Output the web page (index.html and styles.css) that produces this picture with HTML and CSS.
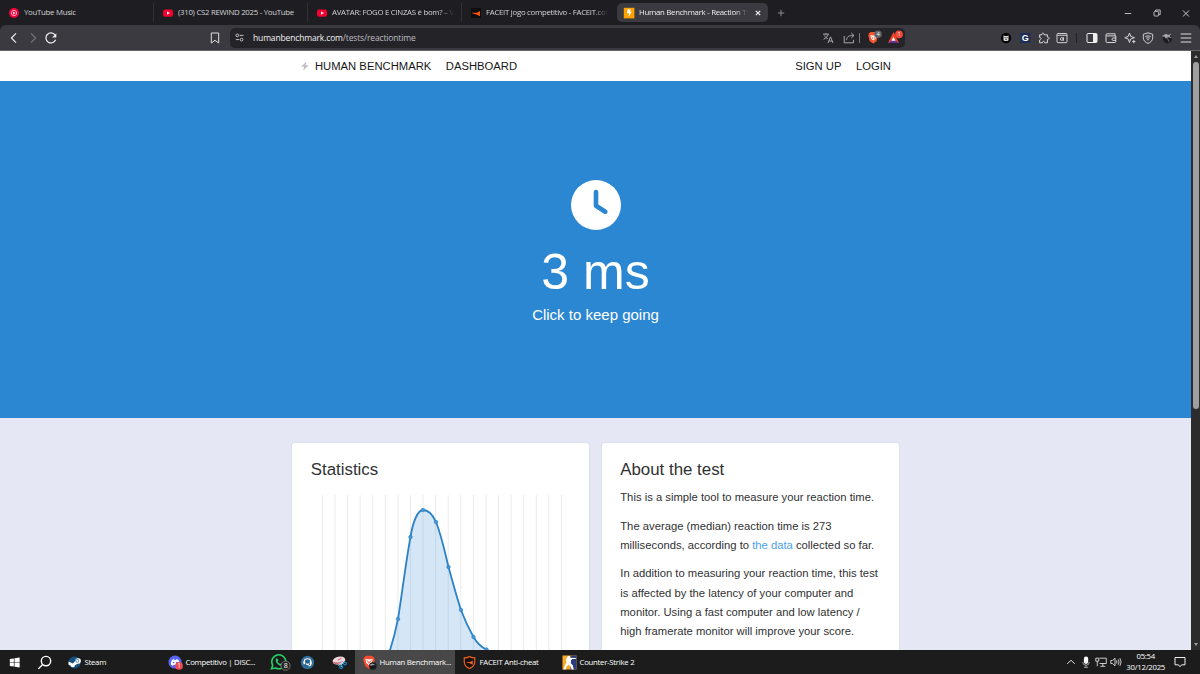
FILE: index.html
```html
<!DOCTYPE html>
<html lang="en">

<head>
    <meta charset="UTF-8">
    <meta name="viewport" content="width=device-width, initial-scale=1.0">
    <title>Human Benchmark - Reaction Time</title>
    <link rel="stylesheet" href="styles.css">
</head>

<body>
    <!-- Browser tabs -->
    <div class="tabs">
        <div class="tab">
            <svg class="fav" viewBox="0 0 12 12"><circle cx="6" cy="6" r="5" fill="#f5003c"/><circle cx="6" cy="6" r="2.7" fill="none" stroke="#fff" stroke-width=".6"/><path d="M5.1 4.5v3L7.6 6z" fill="#fff"/></svg>
            <span class="tab-title">YouTube Music</span>
        </div>
        <div class="tab">
            <svg class="fav" viewBox="0 0 12 12"><rect x="1" y="2.4" width="10" height="7.4" rx="2" fill="#f5002f"/><path d="M5 4.4v3.4L8 6.1z" fill="#fff"/></svg>
            <span class="tab-title">(310) CS2 REWIND 2025 - YouTube</span>
        </div>
        <div class="tab">
            <svg class="fav" viewBox="0 0 12 12"><rect x="1" y="2.4" width="10" height="7.4" rx="2" fill="#f5002f"/><path d="M5 4.4v3.4L8 6.1z" fill="#fff"/></svg>
            <span class="tab-title fade">AVATAR: FOGO E CINZAS é bom? – V</span>
        </div>
        <div class="tab no-line">
            <svg class="fav" viewBox="0 0 12 12"><rect x="1" y="1" width="10" height="10" rx="1" fill="#0d0d0d"/><path d="M2 5.8h4.8L10 4v5.2L6.6 7.4 2 6.2z" fill="#ff5500"/></svg>
            <span class="tab-title fade">FACEIT jogo competitivo - FACEIT.com</span>
        </div>
        <div class="tab active">
            <svg class="fav" viewBox="0 0 12 12"><rect x=".8" y=".8" width="10.6" height="10.6" fill="#ffa200"/><path d="M4.6 2.2h3.1L7 4.7h1.8L5.4 9.9l.7-3.6H4z" fill="#fff"/></svg>
            <span class="tab-title fade">Human Benchmark - Reaction Tim</span>
            <svg class="tab-close" viewBox="0 0 8 8"><path d="M1.8 1.8l4.4 4.4M6.2 1.8L1.8 6.2" stroke="#eee" stroke-width="1.2"/></svg>
        </div>
        <svg class="new-tab" viewBox="0 0 8 8"><path d="M4 .8v6.4M.8 4h6.4" stroke="#a5a4aa" stroke-width=".8"/></svg>
        <div class="window-buttons">
            <svg viewBox="0 0 10 10"><path d="M1.8 5.5h6.4" stroke="#ccc" stroke-width=".9"/></svg>
            <svg viewBox="0 0 10 10" fill="none" stroke="#ccc" stroke-width=".9"><rect x="2" y="3.4" width="4.6" height="4.6" rx=".8"/><path d="M3.6 3.2V2h4.6v4.6H6.9"/></svg>
            <svg viewBox="0 0 10 10"><path d="M2 2.5l6 6M8 2.5l-6 6" stroke="#ddd" stroke-width=".9"/></svg>
        </div>
    </div>

    <!-- Address bar and extensions -->
    <div class="toolbar">
        <div class="nav-buttons">
            <svg viewBox="0 0 12 12"><path d="M8 1.4L3.4 6 8 10.6" fill="none" stroke="#eee" stroke-width="1.2"/></svg>
            <svg viewBox="0 0 12 12"><path d="M4 1.4L8.6 6 4 10.6" fill="none" stroke="#77767b" stroke-width="1.2"/></svg>
            <svg viewBox="0 0 12 12"><path d="M10.6 7.8A5 5 0 1 1 10 3" fill="none" stroke="#eee" stroke-width="1.2"/><path d="M11.300 1.300v4.200H7.100z" fill="#eee"/></svg>
        </div>
        <svg class="bookmark" viewBox="0 0 12 12"><path d="M2.300 1h7.400v10L6 8.300 2.300 11z" fill="none" stroke="#ddd" stroke-width="1" stroke-linejoin="round"/></svg>
        <div class="address">
            <svg class="site" viewBox="0 0 12 12" fill="none" stroke="#d0d0d3"><circle cx="3.6" cy="3.7" r="1.5"/><path d="M6.300 3.7h4M2 8.300h3.700"/><circle cx="8.300" cy="8.300" r="1.500"/></svg>
            <span class="url"><b>humanbenchmark.com</b>/tests/reactiontime</span>
            <div class="address-icons">
                <svg viewBox="1 1 12 12" fill="none" stroke="#a8a7ac"><path d="M2 3.200h6M5 2v1.200M2.600 8.200C5 7.300 6.600 5.500 7 3.300M3.400 4.500C4 6 5.500 7.300 6.800 7.700M7 12l2.500-6.200L12 12M7.900 10h3.300"/></svg>
                <svg viewBox="1 1 12 12" fill="none" stroke="#a8a7ac"><path d="M2.200 5v6.800h9.300V8.800M4.500 9.200c0-3 2-5 7-4.700M9.300 2l2.700 2.500-2.700 2.500"/></svg>
                <i class="line"></i>
                <svg class="brave" viewBox="0 0 16 16"><path d="M3 3l2-1h4.400l2 1 .7 2.500-1.600 5.700-3.200 2.300-3.600-2.200L2.300 5.600z" fill="#fb542b"/><path d="M4.500 5l2 .5h1.700l2-.5-.6 3.500-2.300 2.100L5 8.600z" fill="#fff"/><path d="M5.600 6.800l1 .7-.3 1.500M9 6.800l-1 .7.3 1.500" stroke="#fb542b" stroke-width=".7" fill="none"/><circle cx="12" cy="4.300" r="3.800" fill="#62646d"/><text x="12" y="6.200" class="badge">4</text></svg>
                <svg class="bat" viewBox="0 0 16 16"><path d="M6.500 2L1 13h11z" fill="#fa4524"/><path d="M1 13l5.500-4L12 13z" fill="#662d91"/><path d="M6.500 7L4.400 10.800h4.200z" fill="#fff"/><circle cx="12" cy="4.300" r="3.900" fill="#f24a3a"/><text x="12" y="6.200" class="badge">1</text></svg>
            </div>
        </div>
        <div class="extensions">
            <svg viewBox="0 0 12 12"><circle cx="6" cy="6" r="5.200" fill="#050505"/><path d="M3.500 3.200l1.200.8h2.600l1.200-.8v5L7.300 9H4.700l-1.200-.8z" fill="#ddd"/><path d="M4.500 5.600h1M6.600 5.600h1M5.300 7.300h1.500" stroke="#111" stroke-width=".9"/></svg>
            <svg viewBox="0 0 12 12"><rect x="1.400" y="1" width="10" height="10" fill="#1c2d57"/><text x="6.200" y="9.300" class="letter-g">G</text></svg>
            <svg viewBox="0 0 12 12"><path d="M1.600 2.800h2.200c-.5-2.200 2.800-2.200 2.300 0h3.300v2.300c2.200-.5 2.200 2.800 0 2.300v3.400H6.600c.3-2-2.500-2-2.200 0H1.600V8c2-.3 2-2.800 0-2.500z" fill="none" stroke="#d8d8da"/></svg>
            <svg viewBox="0 0 12 12" fill="none" stroke="#d0d0d3"><rect x="1" y="1.500" width="10" height="9.200" rx="1"/><path d="M1 3.300h10"/><circle cx="5.800" cy="7" r="1.400"/><path d="M7.500 5.200v3.500"/></svg>
            <i class="line dark"></i>
            <svg viewBox="0 0 12 12"><rect x="1" y="1.500" width="10" height="9" rx="1" fill="none" stroke="#eee"/><path d="M7 2h4v8H7z" fill="#eee"/></svg>
            <svg viewBox="0 0 12 12" fill="none" stroke="#d8d8da"><path d="M10 3.800V1.800H2Q1 1.800 1 3v6.300q0 1.200 1.200 1.200h7.600q1 0 1-1V3.900H1.300M11 6H8.200q-1.200 0-1.200 1.200T8.200 8.400H11"/></svg>
            <svg viewBox="0 0 12 12" fill="none" stroke="#d8d8da"><path d="M5.500 1l1.200 3.400L10.500 5.700 6.700 7 5.500 10.500 4.200 7 .8 5.700l3.400-1.300z" stroke-linejoin="round"/><path d="M9.800 8v3.200M8.200 9.600h3.200"/></svg>
            <svg viewBox="0 0 12 12" fill="none" stroke="#d0d0d3"><path d="M6 .8l4.700 1.500v3.400C10.700 8.600 8.500 10.500 6 11.400 3.500 10.500 1.300 8.600 1.300 5.700V2.300z"/><path d="M3.300 4.600q2.700-1.800 5.400 0M4.300 6.200q1.700-1.200 3.400 0"/><circle cx="6" cy="7.700" r=".5"/></svg>
            <svg viewBox="0 0 12 12"><circle cx="6.500" cy="6.800" r="4.600" fill="#1c1c21"/><path d="M.8 4l4.200-2.300 2 1 3.500-.7-2 2.300 3 2-4-1-3 1-1-1.500z" fill="#a3a3a8"/><path d="M5 6l2 1 1 3" stroke="#596475" fill="none"/></svg>
            <svg viewBox="0 0 12 12"><path d="M.7 2h10.600M.7 6h10.600M.7 10h10.600" stroke="#ddd"/></svg>
        </div>
    </div>

    <div class="viewport">
        <div class="page">
            <nav class="navbar">
                <a class="brand"><svg viewBox="0 0 10 10"><path d="M6.500.6L1.200 5.700h3L3.300 9.500 8.700 4.200H5.500z" fill="#bdbdc2"/></svg>HUMAN BENCHMARK</a>
                <a>DASHBOARD</a>
                <a class="signup">SIGN UP</a>
                <a>LOGIN</a>
            </nav>

            <section class="hero">
                <svg class="clock" viewBox="0 0 50 50"><circle cx="25" cy="25" r="25" fill="#fff"/><path d="M25 12v13.800l9.300 5.900" fill="none" stroke="#2b87d1" stroke-width="4.600" stroke-linecap="round" stroke-linejoin="round"/></svg>
                <h1>3 ms</h1>
                <p>Click to keep going</p>
            </section>

            <main class="cards">
                <div class="card">
                    <h2>Statistics</h2>
                    <svg class="chart" viewBox="0 0 260 180">
                        <path class="grid" id="grid"/>
                        <path class="area" d="M69 180C78 162 83 144 87 124C91 99 95 66 99.500 42C102 26 107 15 112 15C117 15 121 18 125 27C131 42 134 58 137.500 72C142 88 146 103 150 115C154 126 158 134 162.500 142C166 148 170 152 175.500 154.500C184 164 200 174 220 180Z"/>
                        <path class="curve" d="M69 180C78 162 83 144 87 124C91 99 95 66 99.500 42C102 26 107 15 112 15C117 15 121 18 125 27C131 42 134 58 137.500 72C142 88 146 103 150 115C154 126 158 134 162.500 142C166 148 170 152 175.500 154.500C184 164 200 174 220 180"/>
                        <g class="dots"><circle cx="87" cy="124" r="1.800"/><circle cx="99.500" cy="42" r="1.800"/><circle cx="112" cy="15" r="1.800"/><circle cx="125" cy="27" r="1.800"/><circle cx="137.500" cy="72" r="1.800"/><circle cx="150" cy="115" r="1.800"/><circle cx="162.500" cy="142" r="1.800"/><circle cx="175.500" cy="154.500" r="1.800"/></g>
                    </svg>
                </div>
                <div class="card">
                    <h2>About the test</h2>
                    <p>This is a simple tool to measure your reaction time.</p>
                    <p>The average (median) reaction time is 273 milliseconds, according to <a>the data</a> collected so far.</p>
                    <p>In addition to measuring your reaction time, this test is affected by the latency of your computer and monitor. Using a fast computer and low latency / high framerate monitor will improve your score.</p>
                </div>
            </main>
        </div>
        <div class="scrollbar">
            <i class="arrow up"></i>
            <i class="thumb"></i>
            <i class="arrow down"></i>
        </div>
    </div>

    <!-- Windows taskbar -->
    <div class="taskbar">
        <div class="task small"><svg viewBox="0 0 16 16"><path d="M3 4.300l4.300-.7v4H3zM8 3.500l5.500-.8v4.900H8zM3 8.300h4.300v4L3 11.700zM8 8.300h5.500v4.900L8 12.400z" fill="#fff"/></svg></div>
        <div class="task small"><svg viewBox="0 0 16 16" fill="none" stroke="#fff" stroke-width="1.500"><circle cx="9.600" cy="6.500" r="5"/><path d="M6 10.200l-4.500 4.600"/></svg></div>
        <div class="task"><svg viewBox="0 0 16 16"><circle cx="8" cy="8" r="6.500" fill="#145080"/><path d="M1.700 7l4.500 2 2.600-2.500a3 3 0 1 1 2.500 2.800L8.500 11a2.300 2.300 0 0 1-4.500.5L1.500 10z" fill="#fff"/><circle cx="11" cy="6.300" r="1.600" fill="none" stroke="#397091" stroke-width=".8"/></svg><span>Steam</span></div>
        <div class="task discord"><svg viewBox="0 0 16 16"><circle cx="7.500" cy="7.500" r="7" fill="#5865f2"/><path d="M3 10.500c0-3 1-5.300 2-5.700l1.500-.3.500.7h1.500l.5-.7 1.500.3c1 .5 2 2.700 2 5.700l-2.500 1-.8-1H6.100l-.7 1z" fill="#fff"/><circle cx="6" cy="8" r=".9" fill="#5865f2"/><circle cx="9.300" cy="8" r=".9" fill="#5865f2"/><circle cx="11.800" cy="11.600" r="4.100" fill="#ef4a4f"/><text x="11.800" y="14" class="count">1</text></svg><span>Competitivo | DISC...</span></div>
        <div class="task whatsapp"><svg viewBox="0 0 22 18"><path d="M2.500 15.800l1.200-3.500A7 7 0 1 1 6.500 15z" fill="none" stroke="#25d366" stroke-width="1.500"/><path d="M7 5.500l1.400 0 .9 2-.8 1c.8 1.300 1.600 2 2.900 2.500l.9-1 2 1c-.3 2-2.200 2.300-4 1.200C8 11 6 8.300 7 5.500z" fill="#25d366"/><circle cx="16.500" cy="12.700" r="4.600" fill="#222" stroke="#888" stroke-width=".8"/><text x="16.500" y="15.400" class="count">8</text></svg></div>
        <div class="task small"><svg viewBox="0 0 16 16"><circle cx="8" cy="8" r="7.200" fill="#28618d"/><circle cx="8" cy="8" r="5.900" fill="none" stroke="#5e96bd" stroke-width=".5"/><path d="M4.400 8.500V7Q4.600 4 8 4t3.600 3v2.500q0 2-2.600 2" stroke="#fff" stroke-width="1.200" fill="none"/><path d="M3.700 7h1.800v2.800H3.700zM10.500 7h1.800v2.800h-1.800z" fill="#fff"/><path d="M6 8.800q2 1 4 0-.3 2-2 2t-2-2z" fill="#fff"/></svg></div>
        <div class="task snip"><svg viewBox="0 0 16 16"><ellipse cx="7.400" cy="5.900" rx="6.800" ry="4.200" fill="#eddadd" transform="rotate(-12 7.400 5.900)"/><path d="M1.200 8q5 2.300 10-1.200" stroke="#cb6978" stroke-width="1.600" fill="none"/><path d="M6 5.500l4-2" stroke="#d7475d"/><path d="M10 5v8M6.500 11l7-3" stroke="#b8d8e4"/><circle cx="9.800" cy="12.800" r="1.600" fill="none" stroke="#168bd0" stroke-width="1.200"/><circle cx="13.800" cy="9" r="1.500" fill="none" stroke="#168bd0" stroke-width="1.200"/></svg></div>
        <div class="task current"><svg viewBox="0 0 16 16"><path d="M2.200 2.600L4.500.8h6l2.300 1.800.8 2.500-2 7L7.500 15l-4-3L1.200 5z" fill="#f74a2e"/><path d="M3.500 4l3 .5h2l3-.5-1 4.500-3 2.500-3-2.500z" fill="#fff"/><path d="M5 6l1.700 1v2M10 6L8.300 7v2" stroke="#f74a2e" fill="none"/><circle cx="11.600" cy="11.600" r="4" fill="#17191f"/><path d="M8.500 10l3-1 3 2-3-.3-2 1z" fill="#a0a1a7"/></svg><span>Human Benchmark...</span></div>
        <div class="task"><svg viewBox="0 0 16 16"><path d="M8 1.500q2.500 1.600 5.600 1.600V7.500q0 4.500-5.600 7-5.600-2.500-5.600-7V3.100q3.100 0 5.600-1.600z" fill="#18100e" stroke="#f26522" stroke-width="1.200"/><path d="M4.700 7.400h4L11.500 5.800v4.700L8.300 8.900 5 7.900z" fill="#f26522"/></svg><span>FACEIT Anti-cheat</span></div>
        <div class="task"><svg viewBox="0 0 16 16"><path d="M.5.500h15v15H.5z" fill="#f7a928"/><path d="M9 .5h6.500v15H9z" fill="#2b3b7c"/><path d="M5.500 2.500l1-1.500 2 .2.300 1.800 6 .3v1H11l-1.300 1.400-.4 3 2.200 2.300 1 4.500h-2.200l-1.200-3.300L6.800 10l-2 2.500-1 3H1.500L3 11.300l1.700-3-.4-3.400z" fill="#fff"/></svg><span>Counter-Strike 2</span></div>

        <div class="tray">
            <svg viewBox="0 0 12 12"><path d="M2.200 7.800L6 4.300l3.800 3.500" fill="none" stroke="#ddd"/></svg>
            <svg viewBox="0 0 12 12"><rect x="3.900" y=".6" width="4.300" height="7.300" rx="2.100" fill="#fff"/><path d="M2.700 6q0 3.200 3.300 3.200T9.300 6M6 9v2.500M4 11.300h4" fill="none" stroke="#bbb" stroke-width=".8"/></svg>
            <svg viewBox="0 0 12 12" fill="none" stroke="#e0e0e0" stroke-width=".9"><path d="M4.500 2.200h6.800v5.300H4.500M7.800 7.500v2.700M5.300 10.300h5M.8 2.200h3v3h-3zM2.300 5.200v5"/></svg>
            <svg viewBox="0 0 12 12" fill="none" stroke="#e0e0e0" stroke-width=".9"><path d="M.8 4.500h1.700L5 2.200v7.600L2.500 7.500H.8zM6.500 4.500q1 1.500 0 3M8.200 3.300q1.800 2.700 0 5.400M9.900 2.200q2.500 3.800 0 7.600"/></svg>
            <div class="time">05:54<br>30/12/2025</div>
            <svg class="notify" viewBox="0 0 12 12"><path d="M1 1.500h10v7.300H7.600L6 10.700 4.500 8.800H1z" fill="none" stroke="#eee"/></svg>
        </div>
    </div>

    <script>
        // Vertical grid lines, one per bucket
        let lines = '';
        for (let i = 0; i < 20; i++) {
            lines += `M${(11.4 + i * 12.58).toFixed(1)} 0V180`;
        }
        document.getElementById('grid').setAttribute('d', lines);
    </script>
</body>

</html>
```
FILE: styles.css
```css
/* General Styles */
* {
    box-sizing: border-box;
}

body {
    margin: 0;
    width: 1200px;
    height: 674px;
    overflow: hidden;
    display: flex;
    flex-direction: column;
    font-family: 'Open Sans', 'Noto Sans', sans-serif;
    font-size: 7.8px;
    letter-spacing: -0.27px;
    color: #d5d5d8;
    background: #1e1d22;
}

svg {
    display: block;
    flex: none;
}

h1,
h2,
p {
    margin: 0;
    font-weight: 400;
}

/* Tabs */
.tabs {
    height: 25px;
    flex: none;
    display: flex;
    align-items: center;
    background: #1e1d22;
}

.tab {
    width: 154px;
    height: 19px;
    padding-left: 8px;
    display: flex;
    align-items: center;
    gap: 4px;
    border-right: 1px solid #323137;
    background-clip: padding-box;
}

.no-line {
    border-color: transparent;
}

.tab .fav {
    width: 12px;
    height: 12px;
}

.tab-title {
    width: 122px;
    padding-bottom: 1px;
    overflow: hidden;
    white-space: nowrap;
}

.fade {
    -webkit-mask-image: linear-gradient(to right, #000 88%, transparent);
    mask-image: linear-gradient(to right, #000 88%, transparent);
}

.tab.active {
    width: 151px;
    margin-left: 1px;
    padding-left: 6px;
    border: 0;
    border-radius: 5px;
    background: #3b3a40;
    color: #f0f0f2;
}

.active .tab-title {
    width: 109px;
}

.tab-close {
    width: 8px;
    height: 8px;
    margin-left: 2px;
}

.new-tab {
    width: 8px;
    height: 8px;
    margin-left: 9px;
}

.window-buttons {
    margin-left: auto;
    padding-right: 9px;
    display: flex;
    gap: 19px;
}

.window-buttons svg {
    width: 10px;
    height: 10px;
}

/* Toolbar */
.toolbar {
    height: 26px;
    flex: none;
    display: flex;
    align-items: center;
    background: #3b3a40;
    border-bottom: 1px solid #66656a;
    border-radius: 6px 6px 0 0;
}

.nav-buttons {
    display: flex;
    gap: 6.5px;
    padding-left: 8px;
}

.toolbar svg {
    width: 12px;
    height: 12px;
}

.bookmark {
    margin-left: 152px;
}

.address {
    width: 675px;
    height: 20px;
    margin-left: 9px;
    padding: 0 2px 0 4px;
    border-radius: 5px;
    background: #242328;
    display: flex;
    align-items: center;
}

.address .site {
    width: 11px;
    height: 11px;
}

.url {
    margin-left: 8px;
    font-size: 8.5px;
    letter-spacing: -0.15px;
    color: #bebdc3;
}

.url b {
    font-weight: 400;
    color: #f0f0f2;
}

.address-icons {
    margin-left: auto;
    display: flex;
    align-items: center;
}

.address-icons svg {
    width: 12px;
    height: 12px;
    margin-right: 9px;
}

.line {
    width: 1px;
    height: 10px;
    background: #7b7a80;
}

.address-icons .line {
    margin-left: -5px;
}

.address-icons .brave,
.address-icons .bat {
    width: 16px;
    height: 16px;
    margin: 0 0 0 5.5px;
}

.badge {
    font-size: 5px;
    text-anchor: middle;
    fill: #fff;
}

.letter-g {
    font: bold 9px 'Liberation Sans', sans-serif;
    text-anchor: middle;
    fill: #fff;
}

.extensions {
    margin-left: auto;
    padding-right: 8px;
    display: flex;
    align-items: center;
    gap: 6.8px;
}

.extensions .dark {
    margin: 0 2px 0 1px;
    background: #222126;
}

/* Page */
.viewport {
    height: 599px;
    flex: none;
    display: flex;
    overflow: hidden;
}

.page {
    width: 1191px;
    height: 599px;
    overflow: hidden;
    background: #e5e8f4;
    color: #303133;
    font-family: 'Liberation Sans', Arial, sans-serif;
    font-size: 11.25px;
    letter-spacing: normal;
}

.navbar {
    height: 30px;
    padding: 0 300px 1px;
    display: flex;
    align-items: center;
    gap: 14.5px;
    background: #fff;
    color: #171717;
}

.brand {
    display: flex;
    align-items: center;
    gap: 5px;
}

.brand svg {
    width: 10px;
    height: 10px;
}

.signup {
    margin-left: auto;
}

.hero {
    height: 337px;
    padding-top: 99px;
    display: flex;
    flex-direction: column;
    align-items: center;
    background: #2b87d1;
    color: #fff;
}

.clock {
    width: 50px;
    height: 50px;
}

.hero h1 {
    margin-top: 12px;
    font-size: 50px;
    line-height: 60px;
}

.hero p {
    margin-top: 3px;
    font-size: 15px;
    line-height: 19px;
}

.cards {
    padding: 25px 292px;
    display: grid;
    grid-template-columns: 297px 297px;
    gap: 12.5px;
}

.card {
    height: 260px;
    padding: 17px 18.75px;
    border-radius: 3px;
    background: #fff;
    box-shadow: 0 0 2px rgba(100, 110, 150, 0.2);
}

.card h2 {
    font-size: 16.875px;
    line-height: 20px;
}

.card p {
    margin-top: 9.5px;
    line-height: 19.15px;
}

.card h2 + p {
    margin-top: 8px;
}

.card a {
    color: #4aa3ea;
}

.chart {
    width: 260px;
    height: 180px;
    margin-top: 14.5px;
}

.grid {
    stroke: #e6e6e6;
    stroke-width: 0.8;
}

.area {
    fill: rgba(43, 135, 209, 0.2);
}

.curve {
    fill: none;
    stroke: #2b82c6;
    stroke-width: 1.8;
}

.dots {
    fill: #4795d5;
    stroke: #2b82c6;
    stroke-width: 0.6;
}

/* Scrollbar */
.scrollbar {
    width: 9px;
    display: flex;
    flex-direction: column;
    align-items: center;
    background: #2c2c2c;
}

.arrow {
    margin: 4px 0;
    border: 2.5px solid transparent;
}

.up {
    border-top: 0;
    border-bottom: 3px solid #a0a0a0;
}

.down {
    margin-top: auto;
    border-bottom: 0;
    border-top: 3px solid #a0a0a0;
}

.thumb {
    width: 6px;
    height: 347px;
    border-radius: 3px;
    background: #9f9f9f;
}

/* Taskbar */
.taskbar {
    height: 24px;
    flex: none;
    display: flex;
    background: #1c1c1c;
    color: #fff;
}

.task {
    width: 100px;
    padding-left: 7px;
    display: flex;
    align-items: center;
    gap: 2.5px;
    white-space: nowrap;
}

.task svg {
    width: 15px;
    height: 15px;
}

.small {
    width: 30px;
}

.discord {
    margin-left: 1px;
}

.task.whatsapp {
    width: 32px;
    padding-left: 8px;
}

.whatsapp svg {
    width: 22px;
    height: 18px;
}

.snip {
    width: 32px;
    padding-left: 9px;
}

.current {
    background: #484848;
}

.count {
    font-size: 7px;
    text-anchor: middle;
    fill: #fff;
}

.tray {
    margin-left: auto;
    padding-right: 14px;
    display: flex;
    align-items: center;
    gap: 3.3px;
}

.tray svg {
    width: 12px;
    height: 12px;
}

.time {
    width: 40px;
    line-height: 11px;
    text-align: center;
}

.tray .notify {
    margin-left: 5px;
}
```
